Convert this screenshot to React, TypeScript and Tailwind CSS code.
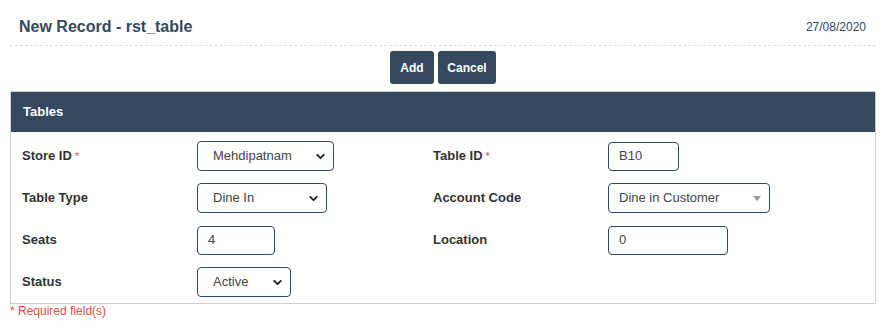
import { ChevronDown } from "lucide-react";

function Label({ text, required }: { text: string; required?: boolean }) {
  return (
    <div className="w-[175px] shrink-0 text-[13px] font-bold text-[#333]">
      {text}
      {required && <span className="ml-[3px] text-[11px] font-normal text-[#e74c3c]">*</span>}
    </div>
  );
}

function Select({ value, width }: { value: string; width: string }) {
  return (
    <div
      className={`flex h-[30px] items-center justify-between rounded-[4px] border border-[#34495e] pl-[15px] pr-[6px] text-[13px] text-[#444] ${width}`}
    >
      <span>{value}</span>
      <ChevronDown className="h-[13px] w-[13px] text-[#222]" strokeWidth={3.5} />
    </div>
  );
}

function Input({ value, width }: { value: string; width: string }) {
  return (
    <div
      className={`flex h-[29px] items-center rounded-[4px] border border-[#34495e] px-[10px] text-[13px] text-[#444] ${width}`}
    >
      {value}
    </div>
  );
}

function Row({ children }: { children: React.ReactNode }) {
  return <div className="flex h-[42px] items-center">{children}</div>;
}

export default function App() {
  return (
    <div className="w-[886px] bg-white font-['Liberation_Sans',Arial,sans-serif]">
      <div className="mx-[10px] flex h-[46px] items-center justify-between border-b border-dashed border-[#dcdcdc] pl-[9px] pr-[10px] pt-[8px]">
        <h1 className="text-[16px] font-bold text-[#34495e]">New Record - rst_table</h1>
        <span className="text-[12px] text-[#34495e]">27/08/2020</span>
      </div>

      <div className="flex justify-center gap-[4px] pt-[5px] pb-[7px]">
        <button className="h-[33px] w-[44px] rounded-[3px] bg-[#34495e] text-[12px] font-bold text-white">
          Add
        </button>
        <button className="h-[33px] w-[58px] rounded-[3px] bg-[#34495e] text-[12px] font-bold text-white">
          Cancel
        </button>
      </div>

      <div className="mx-[10px] border border-[#cfcfcf]">
        <div className="flex h-[40px] items-center bg-[#34495e] px-[12px] text-[13px] font-bold text-white">
          Tables
        </div>
        <div className="grid grid-cols-[411px_1fr] pl-[11px] pt-[3px]">
          <div>
            <Row>
              <Label text="Store ID" required />
              <Select value="Mehdipatnam" width="w-[137px]" />
            </Row>
            <Row>
              <Label text="Table Type" />
              <Select value="Dine In" width="w-[130px]" />
            </Row>
            <Row>
              <Label text="Seats" />
              <Input value="4" width="w-[78px]" />
            </Row>
            <Row>
              <Label text="Status" />
              <Select value="Active" width="w-[94px]" />
            </Row>
          </div>
          <div>
            <Row>
              <Label text="Table ID" required />
              <Input value="B10" width="w-[71px]" />
            </Row>
            <Row>
              <Label text="Account Code" />
              <div className="flex h-[30px] w-[162px] items-center justify-between rounded-[4px] border border-[#34495e] pl-[10px] pr-[8px] text-[13px] text-[#444]">
                <span>Dine in Customer</span>
                <svg width="8" height="5" viewBox="0 0 8 5">
                  <path d="M0 0h8L4 5z" fill="#999" />
                </svg>
              </div>
            </Row>
            <Row>
              <Label text="Location" />
              <Input value="0" width="w-[120px]" />
            </Row>
          </div>
        </div>
      </div>

      <div className="px-[10px] text-[12px] leading-[14px] text-[#e74c3c]">* Required field(s)</div>
    </div>
  );
}
